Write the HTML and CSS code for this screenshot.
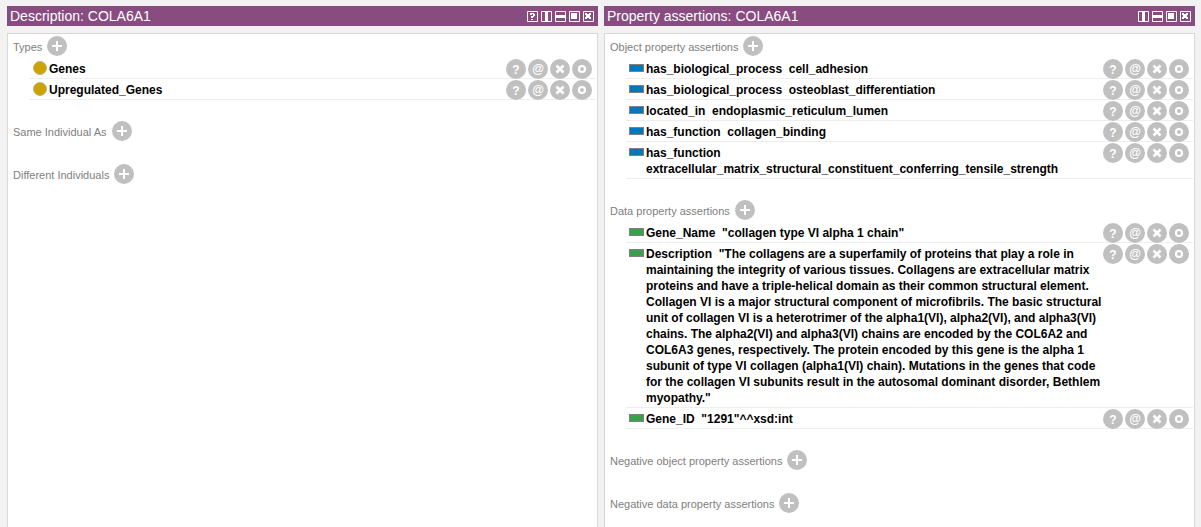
FILE: index.html
```html
<!DOCTYPE html>
<html lang="en">
<head>
<meta charset="utf-8">
<title>COLA6A1</title>
<link rel="stylesheet" href="styles.css">
</head>
<body>
<svg class="defs" aria-hidden="true">
  <symbol id="plus" viewBox="0 0 20 20"><circle cx="10" cy="10" r="10" fill="#c0c0c0"/><path d="M5 10H15M10 5V15" stroke="#fff" stroke-width="2"/></symbol>
  <symbol id="explain" viewBox="0 0 20 20"><circle cx="10" cy="10" r="10" fill="#c0c0c0"/><text x="10" y="15" class="glyph">?</text></symbol>
  <symbol id="annotate" viewBox="0 0 20 20"><circle cx="10" cy="10" r="10" fill="#c0c0c0"/><text x="10" y="14" class="glyph">@</text></symbol>
  <symbol id="remove" viewBox="0 0 20 20"><circle cx="10" cy="10" r="10" fill="#c0c0c0"/><path d="M6.500 6.500L13.500 13.500M13.500 6.500L6.500 13.500" stroke="#fff" stroke-width="2.600"/></symbol>
  <symbol id="edit" viewBox="0 0 20 20"><circle cx="10" cy="10" r="10" fill="#c0c0c0"/><circle cx="10" cy="10" r="3" stroke="#fff" stroke-width="2.200" fill="none"/></symbol>
  <symbol id="w-help" viewBox="0 0 11 11"><path d="M.5 .5H10.500V10.500H.5Z" stroke="#fff" fill="none"/><path d="M3 2H7V3H8V5H7V6H6V7H4V5H6V3H5V4H3ZM4 8H6V9H4Z" fill="#fff"/></symbol>
  <symbol id="w-columns" viewBox="0 0 11 11"><path d="M.5 .5H10.500V10.500H.5Z" stroke="#fff" fill="none"/><path d="M4 1H7V10H4Z" fill="#fff"/></symbol>
  <symbol id="w-rows" viewBox="0 0 11 11"><path d="M.5 .5H10.500V10.500H.5Z" stroke="#fff" fill="none"/><path d="M1 4H10V7H1Z" fill="#fff"/></symbol>
  <symbol id="w-float" viewBox="0 0 11 11"><path d="M.5 .5H10.500V10.500H.5Z" stroke="#fff" fill="none"/><path d="M2 2H8V8H2Z" fill="#fff"/></symbol>
  <symbol id="w-close" viewBox="0 0 11 11"><path d="M.5 .5H10.500V10.500H.5Z" stroke="#fff" fill="none"/><path d="M2 2H4V3H6V2H8V4H7V6H8V8H6V7H4V8H2V6H3V4H2Z" fill="#fff"/></symbol>
</svg>
<main class="workspace">
  <section class="view" aria-label="Description">
    <header class="titlebar">
      <h1 class="title">Description: COLA6A1</h1>
      <div class="window-tools" data-tools="help columns rows float close"></div>
    </header>
    <div class="pane">
      <section class="group">
        <h2 class="group-head"><span class="label">Types</span><button class="round" aria-label="Add type"><svg><use href="#plus"/></svg></button></h2>
        <ul class="rows">
          <li class="row"><span class="dot"></span><span class="text">Genes</span></li>
          <li class="row"><span class="dot"></span><span class="text">Upregulated_Genes</span></li>
        </ul>
      </section>
      <section class="group">
        <h2 class="group-head"><span class="label">Same Individual As</span><button class="round" aria-label="Add same individual"><svg><use href="#plus"/></svg></button></h2>
      </section>
      <section class="group">
        <h2 class="group-head"><span class="label">Different Individuals</span><button class="round" aria-label="Add different individuals"><svg><use href="#plus"/></svg></button></h2>
      </section>
    </div>
  </section>
  <section class="view" aria-label="Property assertions">
    <header class="titlebar">
      <h1 class="title">Property assertions: COLA6A1</h1>
      <div class="window-tools" data-tools="columns rows float close"></div>
    </header>
    <div class="pane">
      <section class="group">
        <h2 class="group-head"><span class="label">Object property assertions</span><button class="round" aria-label="Add object property assertion"><svg><use href="#plus"/></svg></button></h2>
        <ul class="rows">
          <li class="row"><span class="bar object"></span><span class="text">has_biological_process  cell_adhesion</span></li>
          <li class="row"><span class="bar object"></span><span class="text">has_biological_process  osteoblast_differentiation</span></li>
          <li class="row"><span class="bar object"></span><span class="text">located_in  endoplasmic_reticulum_lumen</span></li>
          <li class="row"><span class="bar object"></span><span class="text">has_function  collagen_binding</span></li>
          <li class="row"><span class="bar object"></span><span class="text">has_function  extracellular_matrix_structural_constituent_conferring_tensile_strength</span></li>
        </ul>
      </section>
      <section class="group">
        <h2 class="group-head"><span class="label">Data property assertions</span><button class="round" aria-label="Add data property assertion"><svg><use href="#plus"/></svg></button></h2>
        <ul class="rows">
          <li class="row"><span class="bar data"></span><span class="text">Gene_Name  "collagen type VI alpha 1 chain"</span></li>
          <li class="row"><span class="bar data"></span><span class="text">Description  "The collagens are a superfamily of proteins that play a role in
maintaining the integrity of various tissues. Collagens are extracellular matrix
proteins and have a triple-helical domain as their common structural element.
Collagen VI is a major structural component of microfibrils. The basic structural
unit of collagen VI is a heterotrimer of the alpha1(VI), alpha2(VI), and alpha3(VI)
chains. The alpha2(VI) and alpha3(VI) chains are encoded by the COL6A2 and
COL6A3 genes, respectively. The protein encoded by this gene is the alpha 1
subunit of type VI collagen (alpha1(VI) chain). Mutations in the genes that code
for the collagen VI subunits result in the autosomal dominant disorder, Bethlem
myopathy."</span></li>
          <li class="row"><span class="bar data"></span><span class="text">Gene_ID  "1291"^^xsd:int</span></li>
        </ul>
      </section>
      <section class="group">
        <h2 class="group-head"><span class="label">Negative object property assertions</span><button class="round" aria-label="Add negative object property assertion"><svg><use href="#plus"/></svg></button></h2>
      </section>
      <section class="group">
        <h2 class="group-head"><span class="label">Negative data property assertions</span><button class="round" aria-label="Add negative data property assertion"><svg><use href="#plus"/></svg></button></h2>
      </section>
    </div>
  </section>
</main>
<script src="script.js"></script>
</body>
</html>
```
FILE: styles.css
```css
* { box-sizing: border-box; }
body { margin: 0; background: #f2f2f2; font-family: "Liberation Sans", Arial, sans-serif; }
.defs { display: none; }
.workspace { display: grid; grid-template-columns: 1fr 1fr; gap: 6px; min-height: 100vh; padding: 6px 6px 0 7px; }
.view { display: flex; flex-direction: column; gap: 7px; min-width: 0; }
.titlebar { display: flex; align-items: center; justify-content: space-between; height: 20px; padding: 0 4px 0 3px; background: #884c80; }
.title { margin: 0; color: #fff; font-size: 14px; font-weight: 400; line-height: 20px; }
.window-tools { display: flex; gap: 3px; }
.tool { width: 11px; height: 11px; }
button { display: block; flex: none; margin: 0; padding: 0; border: 0; background: none; cursor: pointer; }
button svg { display: block; width: 100%; height: 100%; }
.glyph { fill: #fff; font-size: 12px; font-weight: 700; text-anchor: middle; font-family: "Liberation Sans", Arial, sans-serif; }
.pane { flex: 1; display: flex; flex-direction: column; gap: 19px; border: 1px solid #d8d8d8; border-bottom: 0; background: #fff; }
.group-head { display: flex; align-items: center; gap: 5px; height: 24px; margin: 0; padding-left: 5px; color: #808080; font-size: 11px; font-weight: 400; }
.label { padding-top: 2px; }
.round { width: 20px; height: 20px; }
.rows { margin: 0 1px 0 21px; padding: 0; list-style: none; }
.row { display: grid; grid-template-columns: 20px 1fr 86px; padding-right: 4px; border-bottom: 1px solid #eee; }
.text { padding: 3px 0 1px; color: #000; font-size: 12px; font-weight: 700; line-height: 16px; white-space: pre-wrap; }
.dot { width: 14px; height: 14px; margin: 3px 0 0 4px; border: 1px solid #c0b080; border-radius: 50%; background: #cca300; }
.bar { width: 15px; height: 8px; margin: 6px 0 0 3px; border: 1px solid #808080; }
.object { background: #0079ba; }
.data { background: #38a14a; }
.actions { display: flex; gap: 2px; height: 20px; padding-top: 1px; }
```
FILE: script.js
```js
const iconButton = (icon, label, className) =>
  `<button class="${className}" aria-label="${label}"><svg><use href="#${icon}"/></svg></button>`;

document.querySelectorAll(".window-tools").forEach((tools) => {
  tools.innerHTML = tools.dataset.tools
    .split(" ")
    .map((name) => iconButton("w-" + name, name, "tool"))
    .join("");
});

document.querySelectorAll(".row").forEach((row) => {
  const actions = document.createElement("div");
  actions.className = "actions";
  actions.innerHTML = ["explain", "annotate", "remove", "edit"]
    .map((name) => iconButton(name, name, "round"))
    .join("");
  row.append(actions);
});
```
